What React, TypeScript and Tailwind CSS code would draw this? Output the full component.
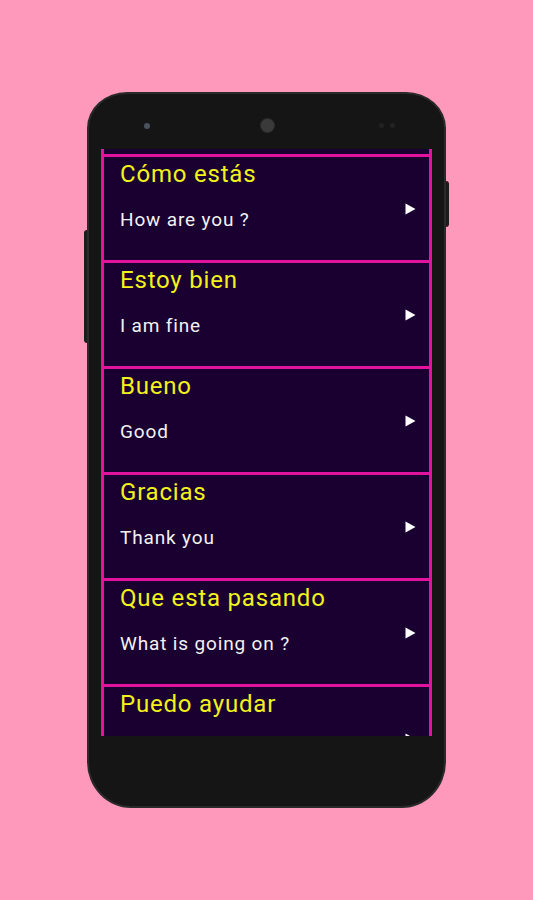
const phrases = [
  { es: 'Cómo estás', en: 'How are you ?' },
  { es: 'Estoy bien', en: 'I am fine' },
  { es: 'Bueno', en: 'Good' },
  { es: 'Gracias', en: 'Thank you' },
  { es: 'Que esta pasando', en: 'What is going on ?' },
  { es: 'Puedo ayudar', en: '' },
];

function PlayArrow() {
  return (
    <svg width="11" height="12" viewBox="0 0 11 12" className="shrink-0">
      <polygon points="0.5,0.5 10.5,6 0.5,11.5" fill="#ffffff" />
    </svg>
  );
}

function PhraseRow({ es, en }: { es: string; en: string }) {
  return (
    <div className="flex h-[106px] shrink-0 items-center border-x-[3px] border-t-[3px] border-[#e2149f] bg-[#1a0031] pl-[16px] pr-[13px]">
      <div className="flex-1 self-start pt-[3px]">
        <p className="text-[24px] leading-[28px] tracking-[0.8px] text-[#f2f21c]">{es}</p>
        {en && (
          <p className="mt-[20px] text-[19px] leading-[24px] tracking-[0.85px] text-[#f2f2f2]">{en}</p>
        )}
      </div>
      <PlayArrow />
    </div>
  );
}

export default function App() {
  return (
    <div
      className="flex min-h-[900px] w-full justify-center bg-[#fe99bc] pt-[92px]"
      style={{ fontFamily: 'Roboto, "Liberation Sans", Arial, sans-serif' }}
    >
      <div className="relative flex h-[716px] w-[359px] flex-col rounded-t-[40px_36px] rounded-b-[44px_46px] border-2 border-[#2a2a2a] bg-[#151515] px-[12px]">
        {/* side buttons */}
        <div className="absolute left-[-5px] top-[136px] h-[113px] w-[3px] rounded-l-sm bg-[#1c1c1c]" />
        <div className="absolute right-[-5px] top-[87px] h-[46px] w-[3px] rounded-r-sm bg-[#1c1c1c]" />

        {/* top bezel */}
        <div className="flex h-[55px] shrink-0 items-center pl-[43px] pt-[8px]">
          <div className="h-[6px] w-[6px] rounded-full bg-[#4a5260]" />
          <div className="ml-[110px] h-[15px] w-[15px] rounded-full border border-[#2c2c2c] bg-[#3a3a3a]" />
          <div className="ml-[104px] h-[5px] w-[5px] rounded-full bg-[#222]" />
          <div className="ml-[6px] h-[5px] w-[5px] rounded-full bg-[#222]" />
        </div>

        {/* screen */}
        <div className="flex h-[587px] shrink-0 flex-col overflow-hidden">
          <div className="h-[5px] shrink-0 border-x-[3px] border-[#e2149f] bg-[#1a0031]" />
          {phrases.map((p) => (
            <PhraseRow key={p.es} es={p.es} en={p.en} />
          ))}
        </div>
      </div>
    </div>
  );
}
